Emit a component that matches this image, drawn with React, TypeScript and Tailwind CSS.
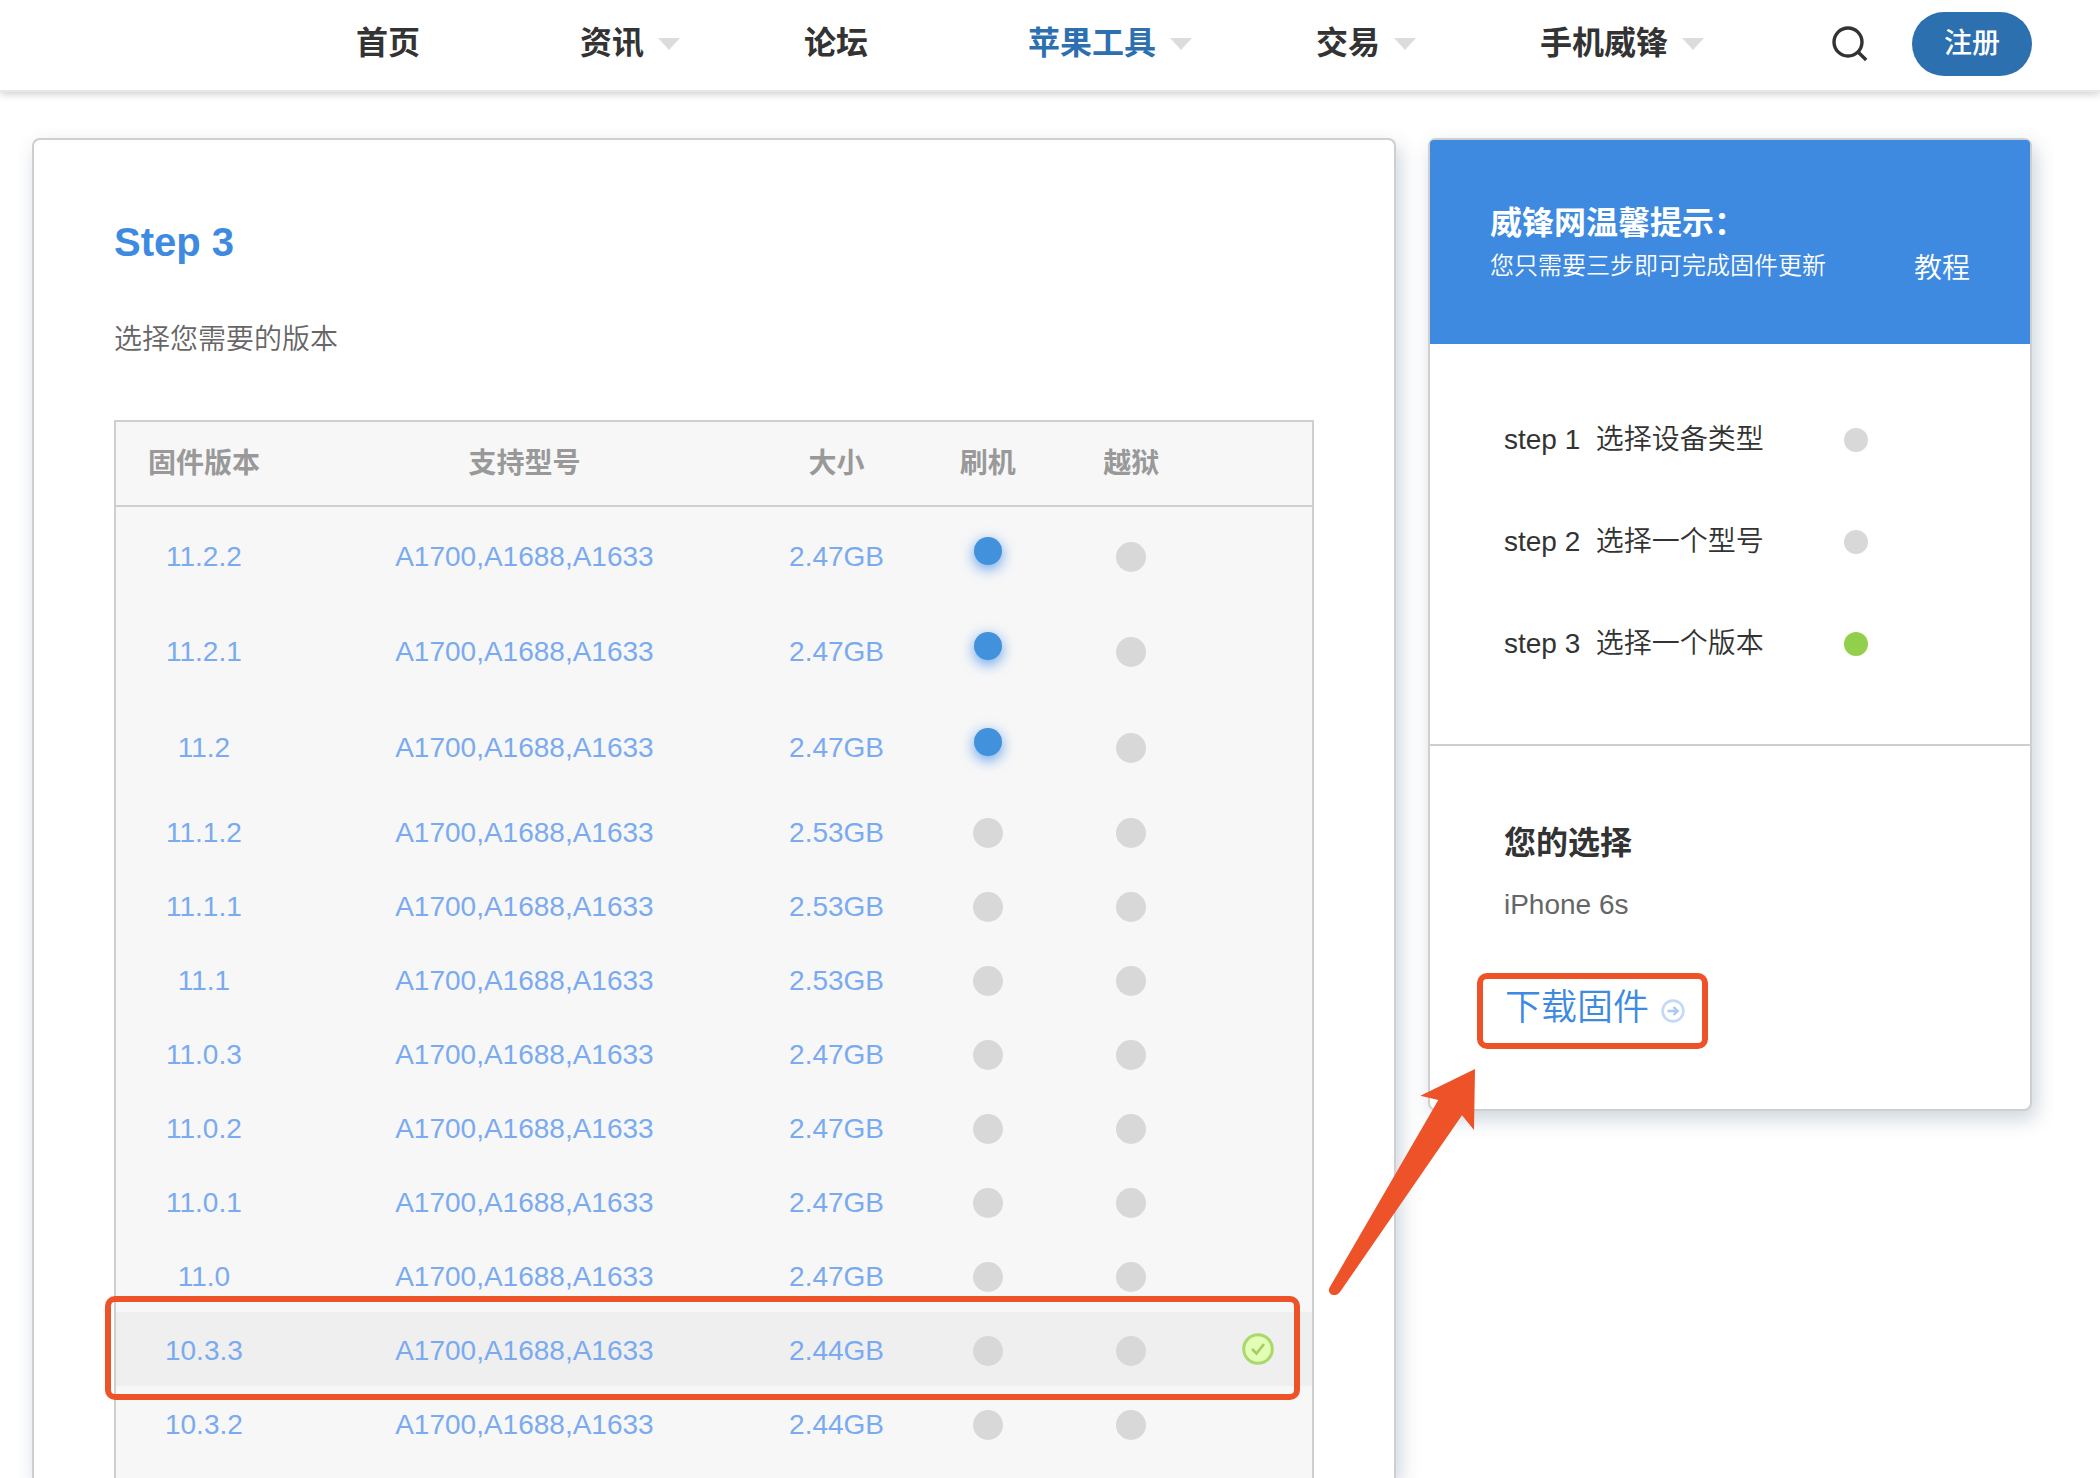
import React, { useState } from 'react';

const navItems = [
  { label: '首页', menu: false },
  { label: '资讯', menu: true },
  { label: '论坛', menu: false },
  { label: '苹果工具', menu: true, active: true },
  { label: '交易', menu: true },
  { label: '手机威锋', menu: true },
];

const firmwares = [
  { version: '11.2.2', size: '2.47GB', open: true },
  { version: '11.2.1', size: '2.47GB', open: true },
  { version: '11.2', size: '2.47GB', open: true },
  { version: '11.1.2', size: '2.53GB', open: false },
  { version: '11.1.1', size: '2.53GB', open: false },
  { version: '11.1', size: '2.53GB', open: false },
  { version: '11.0.3', size: '2.47GB', open: false },
  { version: '11.0.2', size: '2.47GB', open: false },
  { version: '11.0.1', size: '2.47GB', open: false },
  { version: '11.0', size: '2.47GB', open: false },
  { version: '10.3.3', size: '2.44GB', open: false },
  { version: '10.3.2', size: '2.44GB', open: false },
];

const steps = [
  { name: 'step 1', text: '选择设备类型', done: false },
  { name: 'step 2', text: '选择一个型号', done: false },
  { name: 'step 3', text: '选择一个版本', done: true },
];

function Header() {
  return (
    <header className="relative z-10 flex h-[92px] shrink-0 items-start border-b-2 border-[#e8e8e8] bg-white pr-[68px] shadow-[0_2px_8px_rgba(0,0,0,0.2)]">
      <nav className="ml-auto flex gap-40 pt-[18px]">
        {navItems.map(item => (
          <a
            key={item.label}
            href="#"
            className={`relative text-[32px] leading-[50px] font-bold ${item.active ? 'text-[#2d70b0]' : 'text-[#333]'}`}
          >
            {item.label}
            {item.menu && (
              <svg className="absolute top-5 left-full ml-3.5 h-3 w-[22px]" viewBox="0 0 22 12" aria-hidden="true">
                <path d="M0 0h22L11 12z" fill="#dcdcdc" />
              </svg>
            )}
          </a>
        ))}
      </nav>
      <button type="button" aria-label="搜索" className="mt-6 ml-41 h-10 w-10">
        <svg className="h-10 w-10" viewBox="0 0 40 40" fill="none" stroke="#333" strokeWidth="3.4">
          <circle cx="16" cy="18" r="14" />
          <path d="M25.8 27.8l8.4 8.2" />
        </svg>
      </button>
      <button type="button" className="mt-3 ml-10 h-16 w-30 rounded-full bg-[#2d70b0] text-[28px] leading-10 font-medium text-white">注册</button>
    </header>
  );
}

function Dot({ on }: { on: boolean }) {
  return on
    ? <span className="mx-auto mb-2 block h-7 w-7 rounded-full bg-[#4191dc] shadow-[0_4px_14px_rgba(61,138,235,0.8)]" />
    : <span className="mx-auto mt-1 block h-[30px] w-[30px] rounded-full bg-[#d8d8d8]" />;
}

function FirmwareTable() {
  const [selected, setSelected] = useState('10.3.3');

  return (
    <div className="mt-[60px] grow border-2 border-b-0 border-[#cdd0d0] bg-[#f7f7f7]">
      <table className="w-full table-fixed border-collapse text-center text-[28px] leading-10">
        <colgroup>
          <col className="w-[14.7%]" />
          <col className="w-[38.9%]" />
          <col className="w-[13.3%]" />
          <col className="w-[12%]" />
          <col className="w-[12%]" />
          <col />
        </colgroup>
        <thead>
          <tr className="h-[84px] border-b-2 border-[#cdd0d0] text-[#999]">
            <th className="font-bold">固件版本</th>
            <th className="font-bold">支持型号</th>
            <th className="font-bold">大小</th>
            <th className="font-bold">刷机</th>
            <th className="font-bold">越狱</th>
            <td />
          </tr>
        </thead>
        <tbody>
          {firmwares.map(fw => (
            <tr
              key={fw.version}
              onClick={() => setSelected(fw.version)}
              className={`relative cursor-pointer text-[#7aaaf0] ${fw.open ? 'h-24' : 'h-[74px]'} ${selected === fw.version ? 'bg-[#efefef]' : ''}`}
            >
              <td className="pt-1">{fw.version}</td>
              <td className="pt-1">A1700,A1688,A1633</td>
              <td className="pt-1">{fw.size}</td>
              <td><Dot on={fw.open} /></td>
              <td><Dot on={false} /></td>
              <td>
                {selected === fw.version && (
                  <>
                    <svg className="mx-auto h-8 w-8" viewBox="0 0 32 32" fill="none" aria-hidden="true">
                      <circle cx="16" cy="16" r="14.3" fill="#e2ffb5" stroke="#a9d86c" strokeWidth="3" />
                      <path d="M10 16l4.5 4.5L22 11" stroke="#a3cd62" strokeWidth="2.6" />
                    </svg>
                    <span className="pointer-events-none absolute -top-4 right-3 -bottom-3.5 -left-[11px] rounded-[10px] border-6 border-[#ee5228]" />
                  </>
                )}
              </td>
            </tr>
          ))}
        </tbody>
      </table>
    </div>
  );
}

function Sidebar() {
  return (
    <aside className="w-[604px] shrink-0 self-start rounded-lg border-2 border-[#cfcfcf] bg-white shadow-[4px_8px_20px_rgba(20,60,95,0.22)]">
      <div className="flex h-[204px] items-start justify-between rounded-t-sm bg-[#3d8ae0] px-[60px] pt-[62px] text-white">
        <div>
          <h2 className="text-[32px] leading-[42px] font-bold">威锋网温馨提示：</h2>
          <p className="text-2xl leading-11 font-[350]">您只需要三步即可完成固件更新</p>
        </div>
        <a href="#" className="pt-[46px] text-[28px] leading-[42px] font-[350]">教程</a>
      </div>

      <ul className="space-y-[60px] border-b-2 border-[#cfcfcf] pt-[75px] pb-[79px] pl-[74px] text-[28px] leading-[42px] text-[#333]">
        {steps.map(step => (
          <li key={step.name} className="flex w-[364px] items-center justify-between">
            <span className="font-[350]">{step.name}&nbsp; {step.text}</span>
            <span className={`h-6 w-6 rounded-full ${step.done ? 'bg-[#92d04b]' : 'bg-[#d8d8d8]'}`} />
          </li>
        ))}
      </ul>

      <div className="pt-[75px] pb-15 pl-[74px]">
        <h3 className="text-[32px] leading-11 font-bold text-[#333]">您的选择</h3>
        <p className="mt-5 text-[28px] leading-10 text-[#666]">iPhone 6s</p>
        <div className="relative mt-12 -ml-[27px] w-[231px]">
          <a href="#" className="flex h-19 items-center gap-3 rounded-[10px] border-6 border-[#ee5228] pl-[22px] text-[#3d8ae0]">
            <span className="pb-1.5 text-4xl font-[350]">下载固件</span>
            <svg className="h-6 w-6" viewBox="0 0 24 24" fill="none" aria-hidden="true">
              <circle cx="12" cy="12" r="10.4" stroke="#c3d9f7" strokeWidth="2.6" />
              <path d="M6.5 12h10M12.5 8l4.2 4-4.2 4" stroke="#a9c9f4" strokeWidth="2.4" />
            </svg>
          </a>
          {/* pointer from the selected firmware to the download link */}
          <svg className="pointer-events-none absolute top-24 -left-[149px] h-[230px] w-[150px]" viewBox="0 0 150 230" aria-hidden="true">
            <path d="M147 0L92.3 26.7L110.3 31L1.6 218.5C-1.5 225 7.5 230 12.7 222L134 46.3L146 61Z" fill="#ee5228" />
          </svg>
        </div>
      </div>
    </aside>
  );
}

export default function App() {
  return (
    <div className="flex h-screen flex-col overflow-hidden bg-white font-['Liberation_Sans','Noto_Sans_CJK_SC',sans-serif]">
      <Header />
      <div className="flex min-h-0 grow gap-8 pt-[46px] pr-[68px] pl-8">
        <main className="flex min-w-0 grow flex-col rounded-t-lg border-2 border-b-0 border-[#cfcfcf] bg-white px-20 pt-20 shadow-[4px_8px_20px_rgba(20,60,95,0.22)]">
          <h1 className="text-[40px] leading-11 font-bold text-[#3d8ae0]">Step 3</h1>
          <p className="mt-14 text-[28px] leading-10 font-[350] text-[#666]">选择您需要的版本</p>
          <FirmwareTable />
        </main>
        <Sidebar />
      </div>
    </div>
  );
}
